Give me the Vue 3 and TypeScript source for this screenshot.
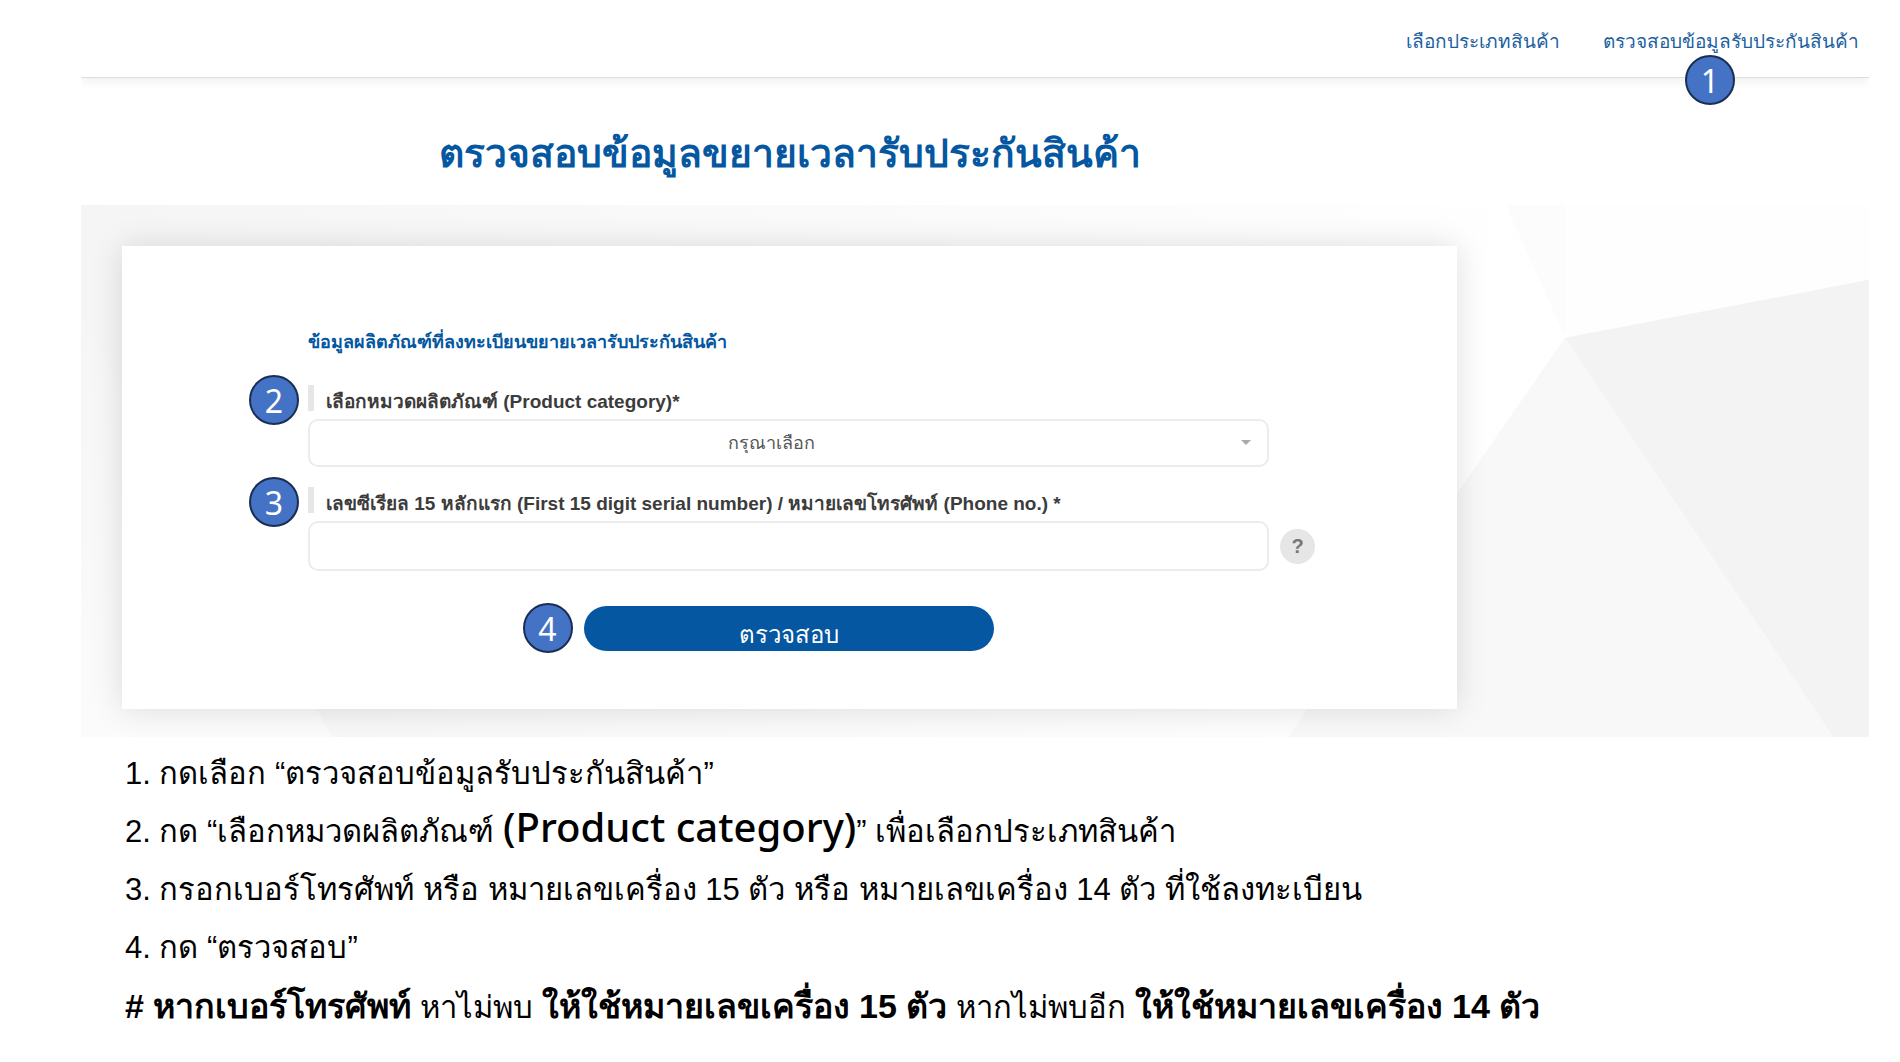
<script setup lang="ts">
import { ref } from 'vue'

interface NavLink { label: string; badge?: string }

const links: NavLink[] = [
  { label: 'เลือกประเภทสินค้า' },
  { label: 'ตรวจสอบข้อมูลรับประกันสินค้า', badge: '1' },
]
const category = ref('')
const serial = ref('')
</script>

<template>
  <div class="page">
    <div class="site">
      <header class="topbar">
        <nav class="nav">
          <a v-for="link in links" :key="link.label" class="nav-link" href="#">
            {{ link.label }}<span v-if="link.badge" class="badge badge-nav">{{ link.badge }}</span>
          </a>
        </nav>
      </header>

      <h1 class="title">ตรวจสอบข้อมูลขยายเวลารับประกันสินค้า</h1>

      <main class="stage">
        <svg class="facets" viewBox="0 0 1788 533" preserveAspectRatio="none" aria-hidden="true">
          <defs>
            <linearGradient id="fade" x1="0" y1="0" x2="1" y2="0">
              <stop offset="0" stop-color="#f5f5f5" />
              <stop offset="1" stop-color="#ffffff" />
            </linearGradient>
            <linearGradient id="corner" x1="0" y1="0" x2="0" y2="1">
              <stop offset="0" stop-color="#f6f6f6" />
              <stop offset="1" stop-color="#fbfbfb" />
            </linearGradient>
          </defs>
          <rect width="1484" height="533" fill="url(#fade)" />
          <polygon points="0,115 150,350 251,533 0,533" fill="url(#corner)" />
          <polygon points="1425,0 1484,0 1484,133" fill="#fcfcfc" />
          <polygon points="1484,0 1788,0 1788,75 1484,133" fill="#fefefe" />
          <polygon points="1484,133 1752,533 1207,533" fill="#f8f8f8" />
          <polygon points="1484,133 1788,75 1788,533 1752,533" fill="#f3f3f3" />
        </svg>

        <form class="card" @submit.prevent>
          <h2 class="section">ข้อมูลผลิตภัณฑ์ที่ลงทะเบียนขยายเวลารับประกันสินค้า</h2>

          <div class="field">
            <span class="badge badge-field">2</span>
            <label class="label" for="category">เลือกหมวดผลิตภัณฑ์ (Product category)*</label>
            <div class="control">
              <select id="category" v-model="category" class="box select">
                <option value="">กรุณาเลือก</option>
              </select>
              <svg class="caret" viewBox="0 0 10 5" aria-hidden="true"><path d="M0 0h10L5 5z" fill="#aaa" /></svg>
            </div>
          </div>

          <div class="field">
            <span class="badge badge-field">3</span>
            <label class="label" for="serial">เลขซีเรียล 15 หลักแรก (First 15 digit serial number) / หมายเลขโทรศัพท์ (Phone no.) *</label>
            <div class="control">
              <input id="serial" v-model="serial" class="box input" type="text" />
              <button class="help" type="button">?</button>
            </div>
          </div>

          <div class="actions">
            <span class="badge">4</span>
            <button class="submit" type="submit">ตรวจสอบ</button>
          </div>
        </form>
      </main>
    </div>

    <section class="steps">
      <p>1. กดเลือก “ตรวจสอบข้อมูลรับประกันสินค้า”</p>
      <p>2. กด “เลือกหมวดผลิตภัณฑ์ <span class="latin">(Product category)</span>” เพื่อเลือกประเภทสินค้า</p>
      <p>3. กรอกเบอร์โทรศัพท์ หรือ หมายเลขเครื่อง 15 ตัว หรือ หมายเลขเครื่อง 14 ตัว ที่ใช้ลงทะเบียน</p>
      <p>4. กด “ตรวจสอบ”</p>
      <p><b># หากเบอร์โทรศัพท์</b> หาไม่พบ <b>ให้ใช้หมายเลขเครื่อง 15 ตัว</b> หากไม่พบอีก <b>ให้ใช้หมายเลขเครื่อง 14 ตัว</b></p>
    </section>
  </div>
</template>

<style>
body { margin: 0; background: #fff; }
</style>

<style scoped>
.page, .page * { box-sizing: border-box; }
.page { font-family: "Liberation Sans", "Noto Sans", sans-serif; color: #333; }
.site { margin: 0 31px 0 81px; }
.topbar { height: 78px; padding: 0 10px; border-bottom: 1px solid #ddd; box-shadow: 0 4px 10px rgba(0, 0, 0, 0.06); clip-path: inset(0 0 -40px 0); }
.nav { display: flex; justify-content: flex-end; gap: 43px; }
.nav-link { position: relative; line-height: 84px; font-size: 19px; color: #1c5f9f; text-decoration: none; white-space: nowrap; }
.badge { display: flex; flex: none; align-items: center; justify-content: center; width: 50px; height: 50px; border: 2px solid #1a2e55; border-radius: 50%; background: #4472c4; color: #fff; font: 32px "Noto Sans", sans-serif; }
.badge-nav { position: absolute; top: 55px; left: 82px; }
.title { margin: 0 412px 0 41px; height: 127px; font-size: 39px; line-height: 152px; text-align: center; color: #0457a0; white-space: nowrap; }
.stage { position: relative; padding: 41px 412px 28px 41px; }
.facets { position: absolute; inset: 0; width: 100%; height: 100%; }
.card { position: relative; padding: 80px 188px 56px 186px; background: #fff; box-shadow: 0 0 30px rgba(0, 0, 0, 0.13); }
.section { margin: 0 0 27px; font-size: 18px; line-height: 32px; color: #0457a0; }
.field { position: relative; margin-bottom: 20px; }
.badge-field { position: absolute; left: -59px; top: -10px; }
.label { display: block; height: 26px; margin-bottom: 8px; padding-left: 12px; border-left: 6px solid #e6e6e6; font-size: 19px; font-weight: 700; line-height: 34px; color: #3c3c3c; white-space: nowrap; }
.control { position: relative; }
.box { display: block; width: 100%; height: 48px; border: 2px solid #ececec; border-radius: 10px; background: #fff; font: 18px "Liberation Sans", sans-serif; color: #555; }
.select { appearance: none; padding: 0 34px 0 0; text-align: center; text-align-last: center; }
.input { height: 50px; padding: 0 16px; }
.caret { position: absolute; right: 18px; top: 21px; width: 10px; height: 5px; }
.help { position: absolute; left: calc(100% + 11px); top: 8px; width: 35px; height: 35px; padding: 0; border: 0; border-radius: 50%; background: #e6e6e6; color: #777; font: bold 20px "Liberation Sans", sans-serif; }
.actions { display: flex; justify-content: center; align-items: center; gap: 11px; padding-right: 61px; margin-top: 32px; }
.submit { width: 410px; height: 45px; padding: 14px 0 0; border: 0; border-radius: 23px; background: #0457a0; color: #fff; font: 24px/30px "Liberation Sans", sans-serif; }
.steps { padding: 8px 0 0 125px; font-size: 31px; color: #000; white-space: nowrap; }
.steps p { margin: 0; height: 58px; line-height: 58px; }
.steps b { font-size: 34px; }
.latin { font: 500 40px/40px "Noto Sans", sans-serif; }
</style>
